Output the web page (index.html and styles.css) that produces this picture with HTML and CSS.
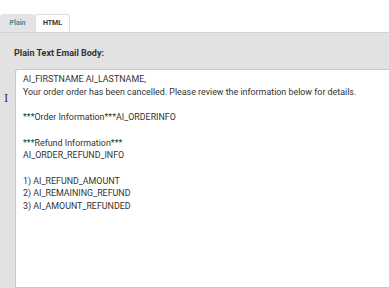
FILE: index.html
```html
<!DOCTYPE html>
<html lang="en">
<head>
  <meta charset="UTF-8" />
  <title>Email Body</title>
  <link rel="stylesheet" href="styles.css">
</head>
<body>
  <div class="tabs">
    <div class="tab active">Plain</div>
    <div class="tab">HTML</div>
  </div>

  <div class="panel">
    <label class="field-label" for="body">Plain Text Email Body:</label>
    <div class="editor-row">
      <span class="cursor">I</span>
      <div class="editor" id="body">
        <div>AI_FIRSTNAME AI_LASTNAME,</div>
        <div>Your order order has been cancelled. Please review the information below for details.</div>
        <div>&nbsp;</div>
        <div>***Order Information***AI_ORDERINFO</div>
        <div>&nbsp;</div>
        <div>***Refund Information***</div>
        <div>AI_ORDER_REFUND_INFO</div>
        <div>&nbsp;</div>
        <div>1) AI_REFUND_AMOUNT</div>
        <div>2) AI_REMAINING_REFUND</div>
        <div>3) AI_AMOUNT_REFUNDED</div>
      </div>
    </div>
  </div>
</body>
</html>
```

FILE: styles.css
```css
* {
  box-sizing: border-box;
}
html, body {
  height: 100%;
}
body {
  margin: 0;
  font-family: Roboto, "Liberation Sans", sans-serif;
  background-color: #fff;
  display: flex;
  flex-direction: column;
  overflow: hidden;
}
.tabs {
  display: flex;
  padding-top: 14px;
  height: 32px;
}
.tab {
  width: 35px;
  font-size: 7px;
  font-weight: bold;
  color: #333;
  text-align: center;
  line-height: 16px;
  border: 1px solid #ddd;
  border-bottom: none;
  border-radius: 3px 3px 0 0;
  background-color: #fff;
}
.tab.active {
  background-color: #e4e4e4;
  color: #3f8a98;
  border-color: #e4e4e4;
}
.panel {
  flex: 1;
  background-color: #e2e2e2;
  border-top: 1px solid #d2d2d2;
  padding: 15px 0 0 14px;
  display: flex;
  flex-direction: column;
}
.field-label {
  font-size: 9px;
  font-weight: bold;
  color: #333;
  margin-bottom: 11px;
}
.editor-row {
  flex: 1;
  display: flex;
  margin-left: -14px;
}
.cursor {
  width: 15px;
  font-family: "DejaVu Serif", serif;
  font-size: 11px;
  color: #333;
  padding: 23px 0 0 4px;
}
.editor {
  flex: 1;
  background-color: #fff;
  border: 1px solid #c8c8c8;
  border-right: none;
  border-radius: 3px 0 0 0;
  padding: 3px 7px;
  font-size: 8.9px;
  line-height: 12.7px;
  color: #333;
  white-space: nowrap;
  overflow: hidden;
}
```
